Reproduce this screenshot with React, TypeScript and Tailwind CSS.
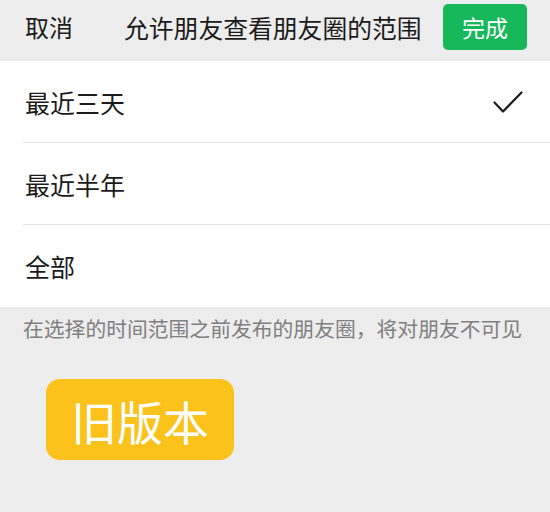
import React from "react";

const font = { fontFamily: '"Noto Sans CJK SC", "Noto Sans", sans-serif' };

function Row({ label, checked, divider }: { label: string; checked?: boolean; divider?: boolean }) {
  return (
    <div className="relative flex h-[82px] items-center pl-[25px] pr-[27px]">
      <span className="text-[25px] leading-none text-[#1b1b1b]">{label}</span>
      {checked && (
        <svg className="ml-auto" width="30" height="23" viewBox="0 0 30 23" fill="none">
          <path d="M1.5 11.5 L10 20.5 L28.5 1.5" stroke="#1b1b1b" strokeWidth="2.2" strokeLinecap="round" strokeLinejoin="round" />
        </svg>
      )}
      {divider && <div className="absolute bottom-0 left-[23px] right-0 h-px bg-[#e3e3e3]" />}
    </div>
  );
}

export default function App() {
  return (
    <div className="h-[512px] w-[550px] overflow-hidden bg-[#ededed]" style={font}>
      <div className="flex h-[61px] items-start">
        <div className="flex h-[54px] w-full items-center pl-[25px] pr-[23px]">
          <span className="text-[24px] leading-none text-[#1b1b1b]">取消</span>
          <span className="ml-[51px] text-[24.8px] leading-none text-[#1b1b1b]">允许朋友查看朋友圈的范围</span>
          <div className="ml-auto flex h-[46px] w-[84px] items-center justify-center rounded-[5px] bg-[#16b85a]">
            <span className="text-[23px] leading-none text-white">完成</span>
          </div>
        </div>
      </div>
      <div className="bg-white">
        <Row label="最近三天" checked divider />
        <Row label="最近半年" divider />
        <Row label="全部" />
      </div>
      <div className="pl-[23px] pt-[7px] text-[20.8px] leading-[28px] text-[#808080]">
        在选择的时间范围之前发布的朋友圈，将对朋友不可见
      </div>
      <div className="ml-[46px] mt-[37px] flex h-[81px] w-[188px] items-center justify-center rounded-[14px] bg-[#fcc21c]">
        <span className="text-[46px] leading-none text-white">旧版本</span>
      </div>
    </div>
  );
}
